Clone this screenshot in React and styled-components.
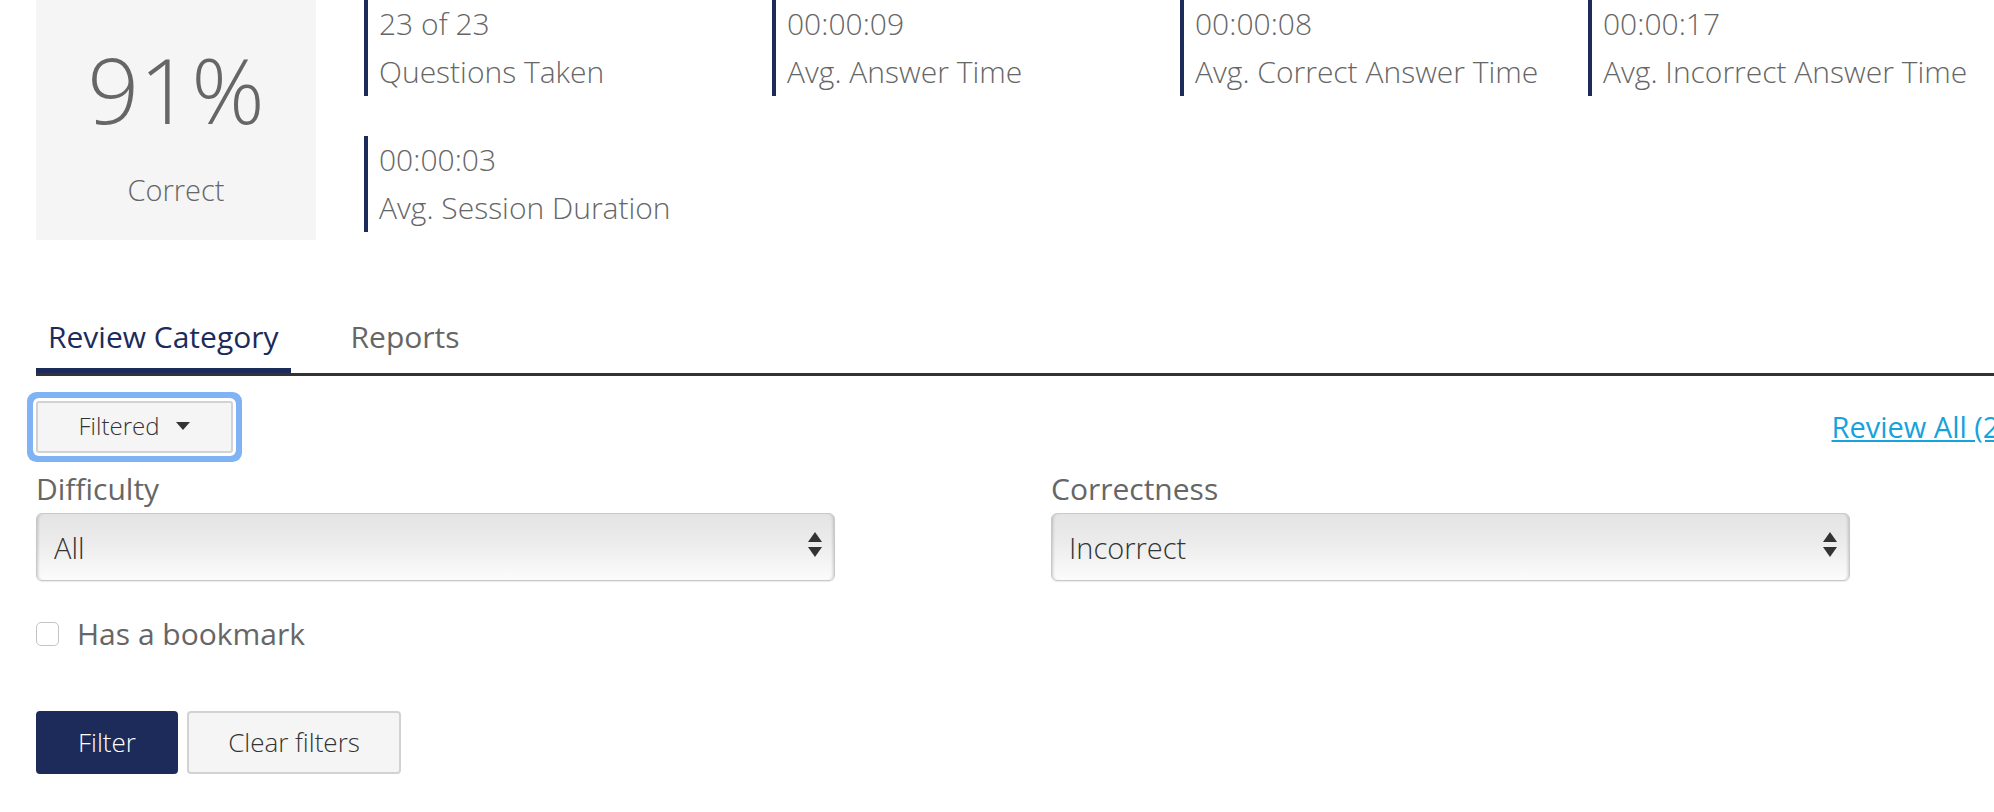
import React from "react";
import styled, { createGlobalStyle } from "styled-components";

const navy = "#1c2b5a";

const GlobalStyle = createGlobalStyle`
    html, body {
        margin: 0;
        padding: 0;
        background: #fff;
        overflow: hidden;
    }
    body {
        font-family: "Open Sans", "Noto Sans", sans-serif;
        color: #666;
    }
    * {
        box-sizing: border-box;
    }
`;

const Page = styled.div`
    width: 2040px;
    padding-left: 36px;
`;

const Summary = styled.section`
    display: flex;
    align-items: flex-start;
`;

const ScoreBox = styled.div`
    width: 280px;
    height: 240px;
    background: #f5f5f5;
    display: flex;
    flex-direction: column;
    align-items: center;
    padding-top: 44px;
`;

const Percent = styled.div`
    font-size: 91px;
    line-height: 91px;
    font-weight: 300;
    color: #666;
    margin-bottom: 40px;
`;

const ScoreLabel = styled.div`
    font-size: 29px;
    line-height: 29px;
    font-weight: 300;
    color: #666;
`;

const StatsGrid = styled.div`
    margin-left: 48px;
    display: grid;
    grid-template-columns: repeat(4, 408px);
    row-gap: 40px;
`;

const Stat = styled.div`
    border-left: 4px solid ${navy};
    padding-left: 11px;
    font-size: 30px;
    line-height: 48px;
    font-weight: 300;
    color: #666;
    white-space: nowrap;
`;

const TabBar = styled.nav`
    margin-top: 79px;
    display: flex;
    gap: 48px;
    border-bottom: 3px solid #333;
`;

const Tab = styled.div`
    padding: 0 12px 13px;
    font-size: 30px;
    line-height: 36px;
    color: ${p => (p.$active ? navy : "#666")};
    border-bottom: 5px solid ${p => (p.$active ? navy : "transparent")};
`;

const Toolbar = styled.div`
    margin-top: 25px;
    display: flex;
    justify-content: space-between;
    align-items: center;
    width: 1972px;
`;

const DropButton = styled.button`
    width: 197px;
    height: 52px;
    display: flex;
    align-items: center;
    justify-content: center;
    gap: 17px;
    background: #f5f5f5;
    border: 2px solid #d2d2d2;
    border-radius: 3px;
    box-shadow: 0 0 0 3px #fff, 0 0 0 9px #80b3f3;
    font-family: inherit;
    font-size: 24px;
    line-height: 30px;
    font-weight: 300;
    color: #333;
    padding: 0 0 3px 0;
`;

const ReviewLink = styled.a`
    font-size: 29px;
    line-height: 36px;
    color: #16a2dc;
    text-decoration: underline;
    white-space: nowrap;
`;

const Filters = styled.div`
    margin-top: 18px;
    display: grid;
    grid-template-columns: 1015px 1015px;
`;

const Field = styled.div`
    display: flex;
    flex-direction: column;
    gap: 6px;
`;

const Label = styled.label`
    font-size: 30px;
    line-height: 36px;
    color: #666;
`;

const SelectWrap = styled.div`
    position: relative;
    width: 799px;
    height: 68px;
`;

const Select = styled.select`
    appearance: none;
    -webkit-appearance: none;
    width: 100%;
    height: 100%;
    padding: 0 40px 0 17px;
    border: 1px solid #c9c9c9;
    border-radius: 6px;
    background: linear-gradient(to bottom, #e4e4e4 0%, #ececec 45%, #fcfcfc 100%);
    box-shadow: inset 3px 0 3px -2px rgba(0, 0, 0, 0.18),
        inset -3px 0 3px -2px rgba(0, 0, 0, 0.18),
        0 1px 1px rgba(0, 0, 0, 0.08);
    font-family: inherit;
    font-size: 29px;
    font-weight: 300;
    color: #333;
    outline: none;
`;

const Arrows = styled.svg`
    position: absolute;
    right: 13px;
    top: 19px;
    pointer-events: none;
`;

const CheckRow = styled.label`
    margin-top: 35px;
    display: flex;
    align-items: center;
    gap: 18px;
    font-size: 30px;
    line-height: 36px;
    color: #666;
`;

const CheckBox = styled.input`
    appearance: none;
    -webkit-appearance: none;
    margin: 0;
    width: 23px;
    height: 24px;
    border: 1px solid #c4c4c4;
    border-radius: 5px;
    background: #fff;
`;

const Actions = styled.div`
    margin-top: 59px;
    display: flex;
    gap: 9px;
`;

const ActionButton = styled.button`
    width: ${p => (p.$primary ? "142px" : "214px")};
    height: 63px;
    padding: 0 0 2px;
    border-radius: 4px;
    border: 2px solid ${p => (p.$primary ? navy : "#d2d2d2")};
    background: ${p => (p.$primary ? navy : "#f5f5f5")};
    color: ${p => (p.$primary ? "#fff" : "#333")};
    font-family: inherit;
    font-size: 26px;
    font-weight: 300;
`;

const stats = [
    ["23 of 23", "Questions Taken"],
    ["00:00:09", "Avg. Answer Time"],
    ["00:00:08", "Avg. Correct Answer Time"],
    ["00:00:17", "Avg. Incorrect Answer Time"],
    ["00:00:03", "Avg. Session Duration"],
];

function SelectArrows() {
    return (
        <Arrows width="14" height="30" viewBox="0 0 14 30">
            <polygon points="7,0 14,10 0,10" fill="#333" />
            <polygon points="0,15 14,15 7,25" fill="#333" />
        </Arrows>
    );
}

function Dropdown({ label, value, options }) {
    return (
        <Field>
            <Label>{label}</Label>
            <SelectWrap>
                <Select defaultValue={value}>
                    {options.map(o => (
                        <option key={o}>{o}</option>
                    ))}
                </Select>
                <SelectArrows />
            </SelectWrap>
        </Field>
    );
}

export default function App() {
    return (
        <Page>
            <GlobalStyle />
            <Summary>
                <ScoreBox>
                    <Percent>91%</Percent>
                    <ScoreLabel>Correct</ScoreLabel>
                </ScoreBox>
                <StatsGrid>
                    {stats.map(([value, label]) => (
                        <Stat key={label}>
                            <div>{value}</div>
                            <div>{label}</div>
                        </Stat>
                    ))}
                </StatsGrid>
            </Summary>

            <TabBar>
                <Tab $active>Review Category</Tab>
                <Tab>Reports</Tab>
            </TabBar>

            <Toolbar>
                <DropButton>
                    Filtered
                    <svg width="14" height="8" viewBox="0 0 14 8">
                        <polygon points="0,0 14,0 7,8" fill="#333" />
                    </svg>
                </DropButton>
                <ReviewLink href="#">Review All (2)</ReviewLink>
            </Toolbar>

            <Filters>
                <Dropdown label="Difficulty" value="All" options={["All", "Easy", "Medium", "Hard"]} />
                <Dropdown label="Correctness" value="Incorrect" options={["All", "Correct", "Incorrect"]} />
            </Filters>

            <CheckRow>
                <CheckBox type="checkbox" />
                Has a bookmark
            </CheckRow>

            <Actions>
                <ActionButton $primary>Filter</ActionButton>
                <ActionButton>Clear filters</ActionButton>
            </Actions>
        </Page>
    );
}
